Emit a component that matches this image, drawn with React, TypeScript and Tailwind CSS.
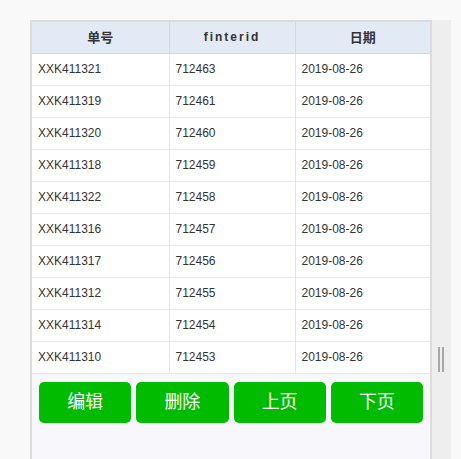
const rows = [
  ['XXK411321', '712463', '2019-08-26'],
  ['XXK411319', '712461', '2019-08-26'],
  ['XXK411320', '712460', '2019-08-26'],
  ['XXK411318', '712459', '2019-08-26'],
  ['XXK411322', '712458', '2019-08-26'],
  ['XXK411316', '712457', '2019-08-26'],
  ['XXK411317', '712456', '2019-08-26'],
  ['XXK411312', '712455', '2019-08-26'],
  ['XXK411314', '712454', '2019-08-26'],
  ['XXK411310', '712453', '2019-08-26'],
];

const font = { fontFamily: '"Liberation Sans", Arial, "Noto Sans CJK SC", sans-serif' };

export default function App() {
  return (
    <div className="h-[459px] w-[461px] overflow-hidden bg-[#f9f9f9] pl-[30px] pt-[20px] flex" style={font}>
      <div className="w-[402px] h-[460px] border-2 border-[#dcdcdc] border-b-0 bg-[#f8f7fc] flex flex-col">
        <table className="w-full border-collapse text-[12px] text-[#333] table-fixed">
          <colgroup>
            <col className="w-[137px]" />
            <col className="w-[126px]" />
            <col className="w-[135px]" />
          </colgroup>
          <thead>
            <tr className="h-[31px] bg-[#e2eaf6]">
              <th className="border-b border-r border-[#d3d8e0] font-bold text-[13px]">单号</th>
              <th className="border-b border-r border-[#d3d8e0] font-bold tracking-[2px]">finterid</th>
              <th className="border-b border-[#d3d8e0] font-bold text-[13px]">日期</th>
            </tr>
          </thead>
          <tbody className="bg-white">
            {rows.map((r) => (
              <tr key={r[0]} className="h-[32px]">
                <td className="border-b border-r border-[#e6e6e6] pl-[6px]">{r[0]}</td>
                <td className="border-b border-r border-[#e6e6e6] pl-[6px]">{r[1]}</td>
                <td className="border-b border-[#e6e6e6] pl-[6px]">{r[2]}</td>
              </tr>
            ))}
          </tbody>
        </table>
        <div className="flex gap-[5px] pl-[7px] pr-[7px] pt-[8px]">
          {['编辑', '删除', '上页', '下页'].map((t) => (
            <button key={t} className="flex-1 h-[41px] rounded-[5px] bg-[#00bb00] text-white text-[18px]">
              {t}
            </button>
          ))}
        </div>
      </div>
      <div className="w-[19px] h-[440px] bg-[#eeeeee] relative">
        <div className="absolute left-[6px] top-[327px] flex gap-[2px]">
          <div className="w-[2px] h-[25px] bg-[#a8a8a8]" />
          <div className="w-[2px] h-[25px] bg-[#a8a8a8]" />
        </div>
      </div>
    </div>
  );
}
